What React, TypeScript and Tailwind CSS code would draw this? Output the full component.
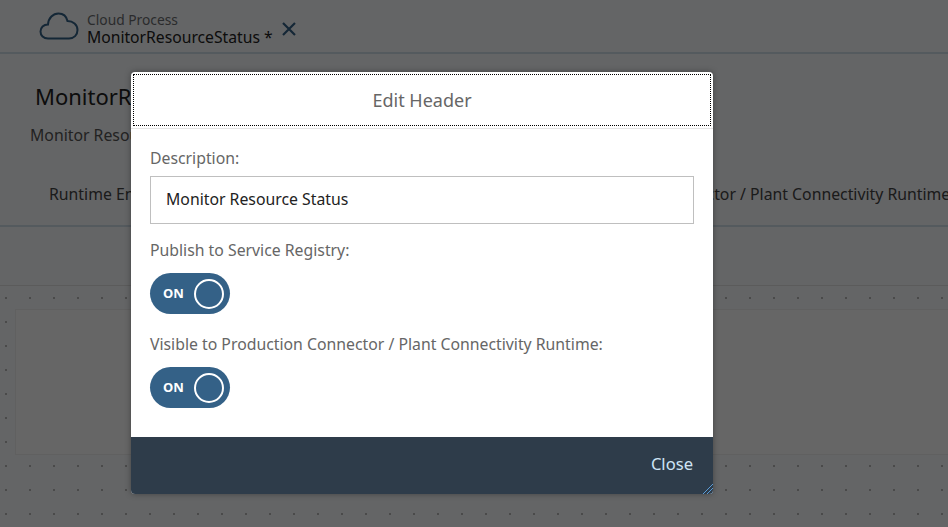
const font = "font-['Noto_Sans','Open_Sans',sans-serif]"

function Toggle() {
  return (
    <div className="flex h-[41px] w-[80px] items-center justify-between rounded-full bg-[#346187] pl-[13px] pr-[6px]">
      <span className="text-[13px] font-bold leading-none text-white">ON</span>
      <span className="h-[30px] w-[30px] rounded-full border-2 border-white" />
    </div>
  )
}

function EditHeaderDialog() {
  return (
    <div className="absolute left-[131px] top-[72px] flex h-[422px] w-[582px] flex-col overflow-hidden rounded-[4px] bg-white shadow-[0_0_6px_rgba(0,0,0,0.35)]">
      <header className="p-[2px] pb-0">
        <div className="flex h-[52px] items-center justify-center border border-dotted border-black text-[18px] text-[#666666]">
          Edit Header
        </div>
      </header>
      <div className="mt-[2px] flex-1 border-t border-[#e5e5e5] px-[19px] pt-[19px]">
        <label className="block text-[15.8px] leading-[20px] text-[#666666]">Description:</label>
        <div className="mt-[8px] flex h-[48px] w-[544px] items-center border border-[#bfbfbf] px-[15px] text-[15.8px] text-[#222222]">
          Monitor Resource Status
        </div>
        <label className="mt-[16px] block text-[15.8px] leading-[20px] text-[#666666]">Publish to Service Registry:</label>
        <div className="mt-[13px]">
          <Toggle />
        </div>
        <label className="mt-[20px] block text-[15.8px] leading-[20px] text-[#666666]">
          Visible to Production Connector / Plant Connectivity Runtime:
        </label>
        <div className="mt-[13px]">
          <Toggle />
        </div>
      </div>
      <footer className="relative flex h-[57px] items-center justify-end bg-[#2e3c4a] pb-[2px] pr-[20px] text-[16.6px] text-[#cfe4f5]">
        Close
        <svg className="absolute bottom-0 right-0" width="11" height="11" viewBox="0 0 11 11" aria-hidden="true">
          <path d="M1 11 11 1M5 11 11 5M9 11 11 9" stroke="#5b9bd5" strokeWidth="1" fill="none" />
        </svg>
      </footer>
    </div>
  )
}

export default function App() {
  return (
    <div className={`relative h-[527px] w-[948px] overflow-hidden bg-[#fbfcfe] ${font}`}>
      {/* Page behind the dialog */}
      <div className="flex h-[54px] items-center border-b-2 border-[#d3e0ea] pl-[39px]">
        <svg width="40" height="28" viewBox="0 0 40 28" fill="none" stroke="#346187" strokeWidth="2" aria-hidden="true">
          <path d="M9 26.5C4.500 26.500 1.500 23.500 1.500 19.500C1.500 15.500 4.500 12.500 9 12.500C9.500 6 14 1.500 19.500 1.500C24 1.500 27.500 4.500 28.500 9C34 9 38.500 12.500 38.500 18C38.500 23 35 26.500 30 26.500Z" />
        </svg>
        <div className="ml-[8px] mt-[6px] flex flex-col">
          <span className="text-[13.8px] leading-[16px] pt-[1px] text-[#6a6d70]">Cloud Process</span>
          <span className="text-[15.7px] leading-[19px] text-[#222222]">MonitorResourceStatus *</span>
        </div>
        <svg className="ml-[8px] mt-[6px]" width="16" height="16" viewBox="0 0 16 16" stroke="#346187" strokeWidth="2.200" aria-hidden="true">
          <path d="M2 2 14 14M14 2 2 14" />
        </svg>
      </div>
      <div className="h-[173px] border-b-2 border-[#d3e0ea] pt-[27px]">
        <h1 className="ml-[35px] text-[22px] leading-[30px] text-[#222222]">MonitorResourceStatus</h1>
        <p className="ml-[30px] mt-[14px] text-[15.8px] leading-[20px] text-[#555555]">Monitor Resource Status</p>
        <div className="relative mt-[37px] h-[24px] whitespace-nowrap text-[15.8px] leading-[24px] text-[#444444]">
          <span className="absolute left-[49px]">Runtime Environment</span>
          <span className="absolute left-[573px]">Production Connector / Plant Connectivity Runtime</span>
        </div>
      </div>
      <div className="h-[59px] border-b border-[#e4e4e4]" />
      <div className="h-[241px] bg-[radial-gradient(circle,#b8b8b8_0.7px,transparent_1px)] bg-[size:24px_24px] bg-[position:-6px_0px] pl-[15px] pt-[23px]">
        <div className="h-[146px] border-y border-l border-[#f0f0f0] bg-[#fefefe]" />
      </div>

      {/* Modal shade */}
      <div className="absolute inset-0 bg-black/60" />
      <EditHeaderDialog />
    </div>
  )
}
